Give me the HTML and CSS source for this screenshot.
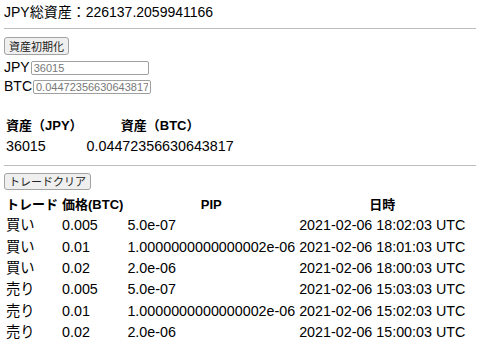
FILE: index.html
```html
<!DOCTYPE html>
<html lang="ja">
<head>
<meta charset="utf-8">
<link rel="stylesheet" href="styles.css">
</head>
<body>
<div class="total">JPY総資産：226137.2059941166</div>
<hr class="rule rule-top">
<button class="btn">資産初期化</button>
<div class="field field-first"><span class="label">JPY</span><input class="inp" type="text" placeholder="36015"></div>
<div class="field"><span class="label">BTC</span><input class="inp" type="text" placeholder="0.04472356630643817"></div>
<table class="assets">
  <tr><th>資産（JPY）</th><th>資産（BTC）</th></tr>
  <tr><td>36015</td><td>0.04472356630643817</td></tr>
</table>
<hr class="rule rule-mid">
<button class="btn btn-short">トレードクリア</button>
<table class="trades">
  <tr><th>トレード</th><th>価格(BTC)</th><th>PIP</th><th>日時</th></tr>
  <tr><td>買い</td><td>0.005</td><td>5.0e-07</td><td>2021-02-06 18:02:03 UTC</td></tr>
  <tr><td>買い</td><td>0.01</td><td>1.0000000000000002e-06</td><td>2021-02-06 18:01:03 UTC</td></tr>
  <tr><td>買い</td><td>0.02</td><td>2.0e-06</td><td>2021-02-06 18:00:03 UTC</td></tr>
  <tr><td>売り</td><td>0.005</td><td>5.0e-07</td><td>2021-02-06 15:03:03 UTC</td></tr>
  <tr><td>売り</td><td>0.01</td><td>1.0000000000000002e-06</td><td>2021-02-06 15:02:03 UTC</td></tr>
  <tr><td>売り</td><td>0.02</td><td>2.0e-06</td><td>2021-02-06 15:00:03 UTC</td></tr>
</table>
</body>
</html>
```
FILE: styles.css
```css
html, body {
  background: #fff;
}
body {
  margin: 4px 4px;
  font-family: "Liberation Sans", "Noto Sans CJK JP", sans-serif;
  font-size: 14px;
  color: #000;
  line-height: 17px;
}
.total {
  line-height: 17px;
}
.rule {
  border: 0;
  border-top: 1px solid #bdbdbd;
  height: 0;
}
.rule-top {
  margin: 7px 0 8px;
}
.rule-mid {
  margin: 6px 0 7px;
}
.btn {
  display: block;
  height: 18px;
  padding: 0 4px;
  margin: 0;
  font-family: "Noto Sans CJK JP", sans-serif;
  font-size: 11px;
  line-height: 16px;
  color: #222;
  background: #efefef;
  border: 1px solid #a3a3a3;
  border-radius: 3px;
}
.btn-short {
  height: 17px;
  line-height: 15px;
}
.field {
  display: flex;
  align-items: center;
  height: 19px;
}
.field-first {
  margin-top: 3px;
}
.label {
  line-height: 19px;
}
.inp {
  box-sizing: border-box;
  width: 118px;
  height: 14px;
  margin: 0 0 0 1px;
  padding: 0 2px;
  font-family: "Liberation Sans", sans-serif;
  font-size: 11px;
  border: 1px solid #a0a0a0;
  border-radius: 2px;
  background: #fff;
}
.inp::placeholder {
  color: #777;
}
table {
  border-collapse: separate;
  border-spacing: 2px;
}
th, td {
  padding: 1px;
  line-height: 17.4px;
  white-space: nowrap;
}
th {
  font-size: 13px;
  font-weight: bold;
  text-align: center;
}
td {
  font-size: 14.3px;
  text-align: left;
}
.assets {
  margin: 18px 0 0 -1px;
}
.trades {
  margin: 3px 0 0 -1px;
}
```
